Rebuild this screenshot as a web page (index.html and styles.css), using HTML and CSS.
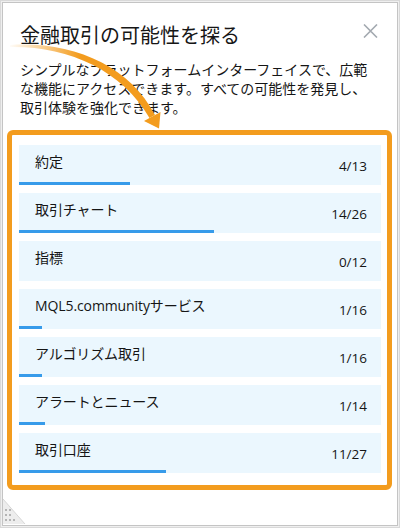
FILE: index.html
```html
<!DOCTYPE html>
<html lang="ja">
<head>
<meta charset="utf-8">
<title>金融取引の可能性を探る</title>
<link rel="stylesheet" href="styles.css">
</head>
<body>
<div class="window">
  <div class="panel">
    <div class="header">
      <h1 class="title">金融取引の可能性を探る</h1>
      <button class="close" aria-label="閉じる">
        <svg width="15" height="14" viewBox="0 0 15 14"><path d="M1 0.5 L14 13.5 M14 0.5 L1 13.5" stroke="#a3a9b0" stroke-width="1.6" fill="none"/></svg>
      </button>
    </div>
    <p class="desc">シンプルなプラットフォームインターフェイスで、広範な機能にアクセスできます。すべての可能性を発見し、取引体験を強化できます。</p>
    <div class="highlight">
      <ul class="list">
        <li class="row"><div class="line"><span class="label">約定</span><span class="count">4/13</span></div><div class="bar" style="width:30.77%"></div></li>
        <li class="row"><div class="line"><span class="label">取引チャート</span><span class="count">14/26</span></div><div class="bar" style="width:53.85%"></div></li>
        <li class="row"><div class="line"><span class="label">指標</span><span class="count">0/12</span></div><div class="bar" style="width:0%"></div></li>
        <li class="row"><div class="line"><span class="label">MQL5.communityサービス</span><span class="count">1/16</span></div><div class="bar" style="width:6.25%"></div></li>
        <li class="row"><div class="line"><span class="label">アルゴリズム取引</span><span class="count">1/16</span></div><div class="bar" style="width:6.25%"></div></li>
        <li class="row"><div class="line"><span class="label">アラートとニュース</span><span class="count">1/14</span></div><div class="bar" style="width:7.14%"></div></li>
        <li class="row"><div class="line"><span class="label">取引口座</span><span class="count">11/27</span></div><div class="bar" style="width:40.74%"></div></li>
      </ul>
    </div>
    <svg class="arrow" width="170" height="135" viewBox="0 0 170 135">
      <defs>
        <linearGradient id="fade" x1="8" y1="0" x2="110" y2="0" gradientUnits="userSpaceOnUse">
          <stop offset="0" stop-color="#f39c1e" stop-opacity="0"/>
          <stop offset="0.7" stop-color="#f39c1e" stop-opacity="1"/>
          <stop offset="1" stop-color="#f39c1e" stop-opacity="1"/>
        </linearGradient>
      </defs>
      <path d="M10 45 C 72 41, 129 65, 155 115 L 149.5 118 C 122 70, 68 46, 10 47 Z" fill="url(#fade)"/>
      <polygon points="144,121 160.5,112 159,128.5" fill="#f39c1e"/>
    </svg>
    <svg class="grip" width="24" height="26" viewBox="0 0 24 26">
      <polygon points="0,0 22,25 0,25" fill="#ededed"/>
      <line x1="0" y1="0" x2="22" y2="25" stroke="#d6d6d6" stroke-width="1"/>
      <g fill="#b4b4b4">
        <rect x="2" y="10" width="2" height="2"/>
        <rect x="6" y="10" width="2" height="2"/>
        <rect x="2" y="15" width="2" height="2"/>
        <rect x="6" y="15" width="2" height="2"/>
        <rect x="2" y="20" width="2" height="2"/>
        <rect x="6" y="20" width="2" height="2"/>
        <rect x="10" y="20" width="2" height="2"/>
      </g>
    </svg>
  </div>
</div>
</body>
</html>
```

FILE: styles.css
```css
* { box-sizing: border-box; }

html, body {
  margin: 0;
  padding: 0;
  background: #ffffff;
}

body {
  font-family: "Open Sans", "Noto Sans CJK JP", sans-serif;
  color: #151515;
}

.window {
  width: 400px;
  height: 528px;
  border: 1px solid #d9d9d9;
  padding: 1px;
  background: #efefef;
}

.panel {
  position: relative;
  height: 100%;
  border: 1px solid #c4c4c4;
  background: #ffffff;
  overflow: hidden;
}

.header {
  display: flex;
  justify-content: space-between;
  align-items: flex-start;
  padding: 18px 19px 0 17px;
}

.title {
  margin: 0;
  font-family: "Noto Sans CJK JP", sans-serif;
  font-size: 20px;
  font-weight: 400;
  line-height: 28px;
  color: #161616;
}

.close {
  margin-top: 3px;
  padding: 0;
  border: 0;
  background: none;
  width: 15px;
  height: 14px;
  display: flex;
}

.desc {
  margin: 11px 0 0;
  padding: 0 19px 0 17px;
  font-family: "Noto Sans CJK JP", sans-serif;
  font-size: 14px;
  line-height: 19px;
  color: #151515;
}

.highlight {
  margin: 13px 5px 0 4px;
  border: 5px solid #f39c1e;
  border-radius: 6px;
  padding: 10px 6px 12px 7px;
}

.list {
  list-style: none;
  margin: 0;
  padding: 0;
  display: flex;
  flex-direction: column;
  gap: 8px;
}

.row {
  height: 40px;
  background: #ebf7fe;
  display: flex;
  flex-direction: column;
}

.line {
  display: flex;
  justify-content: space-between;
  align-items: flex-start;
  padding: 7px 14px 0 16px;
}

.label {
  font-size: 14px;
  line-height: 20px;
  color: #151515;
  letter-spacing: -0.1px;
}

.count {
  margin-top: 4px;
  font-size: 13.5px;
  line-height: 20px;
  color: #151515;
}

.bar {
  margin-top: auto;
  height: 3px;
  background: #379bea;
}

.arrow {
  position: absolute;
  left: -3px;
  top: -3px;
  pointer-events: none;
}

.grip {
  position: absolute;
  left: 0;
  bottom: 0;
}
```
